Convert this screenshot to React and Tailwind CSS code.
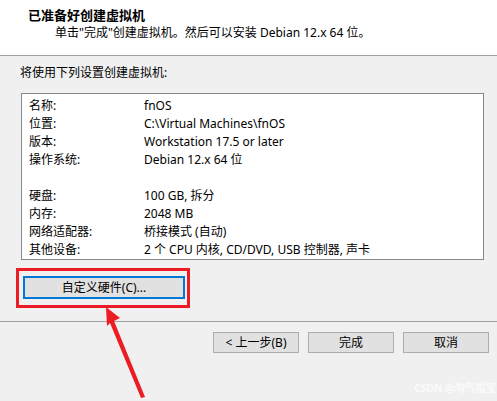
import React from 'react'

const ROWS = [
  ['名称:', 'fnOS'],
  ['位置:', 'C:\\Virtual Machines\\fnOS'],
  ['版本:', 'Workstation 17.5 or later'],
  ['操作系统:', 'Debian 12.x 64 位'],
  ['', ''],
  ['硬盘:', '100 GB, 拆分'],
  ['内存:', '2048 MB'],
  ['网络适配器:', '桥接模式 (自动)'],
  ['其他设备:', '2 个 CPU 内核, CD/DVD, USB 控制器, 声卡'],
]

const FOOT = ['< 上一步(B)', '完成', '取消']

export default function App() {
  return (
    <div className="relative w-[497px] h-[401px] overflow-hidden bg-[#f0f0f0] text-[12px] text-black font-['Noto_Sans','Noto_Sans_CJK_SC',sans-serif]">
      {/* Header */}
      <div className="h-[56px] bg-white border-b border-[#a0a0a0] pt-[6px]">
        <div className="pl-[28px] h-[18px] leading-[18px] text-[13px] font-bold">已准备好创建虚拟机</div>
        <div className="pl-[55px] h-[18px] leading-[18px]">单击"完成"创建虚拟机。然后可以安装 Debian 12.x 64 位。</div>
      </div>

      {/* Body */}
      <div className="h-[305px] flex flex-col px-[20px] pt-[9px]">
        <div className="h-[16px] leading-[16px]">将使用下列设置创建虚拟机:</div>

        <div className="mt-[12px] ml-[1px] w-[463px] h-[167px] bg-white border border-[#828790] pt-[3px] pl-[7px]">
          {ROWS.map(([k, v], i) => (
            <div key={i} className="flex h-[18px] leading-[18px]">
              <span className="w-[115px] shrink-0">{k}</span>
              <span className="whitespace-nowrap">{v}</span>
            </div>
          ))}
        </div>

        <div className="mt-[8px] -ml-[4px] w-[174px] h-[40px] border-[3px] border-[#ed1c24] pl-[4px] pt-[5px]">
          <button className="w-[162px] h-[23px] bg-[#e1e1e1] border-2 border-[#0078d7] leading-[18px]">自定义硬件(C)...</button>
        </div>

        <div className="mt-auto -mx-[20px] h-[40px] border-t border-[#a0a0a0] flex items-start pt-[10px] pl-[213px] gap-[9px]">
          {FOOT.map(t => (
            <button key={t} className="w-[86px] h-[21px] bg-[#e1e1e1] border border-[#adadad] leading-[18px]">{t}</button>
          ))}
        </div>
      </div>

      {/* Annotation arrow */}
      <svg className="absolute left-0 top-0 pointer-events-none" width="497" height="401">
        <polygon points="106,307 120,318 114,321 145,397 141,398 110,323 107,326" fill="#ed1c24" />
      </svg>

      {/* Watermark */}
      <div className="absolute left-[414px] top-[381px] text-[11px] leading-[14px] font-bold tracking-[-0.5px] text-white/70 whitespace-nowrap">CSDN @淘气福宝</div>
    </div>
  )
}
